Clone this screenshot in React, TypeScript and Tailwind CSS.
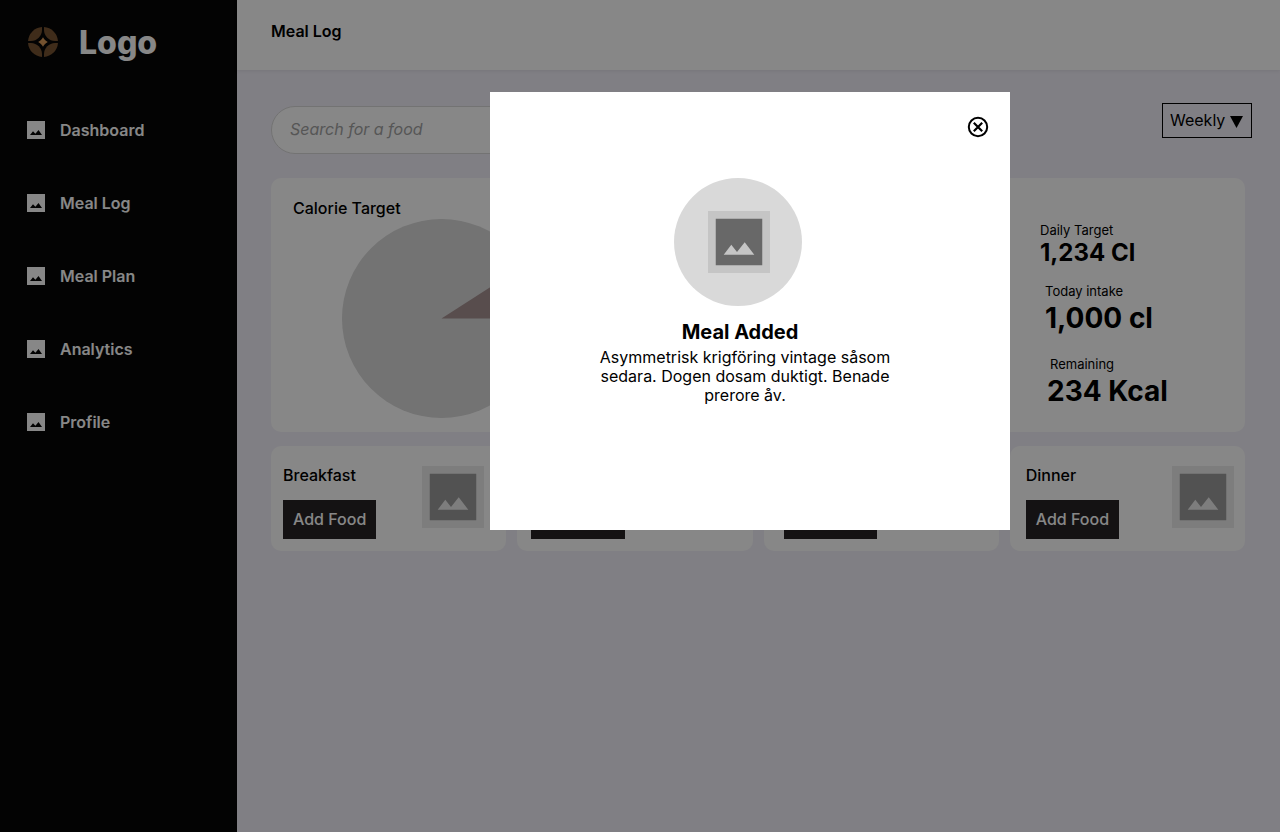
import { useState } from "react";

const navItems = ["Dashboard", "Meal Log", "Meal Plan", "Analytics", "Profile"];

const meals = [
  { name: "Breakfast", padding: "pl-3 pr-[22px]" },
  { name: "Lunch", padding: "pl-[14px] pr-5" },
  { name: "Snack", padding: "pl-5 pr-3" },
  { name: "Dinner", padding: "pl-4 pr-[11px]" },
];

const stats = [
  { label: "Daily Target", value: "1,234 Cl", box: "", labelBox: "", size: "text-2xl leading-7" },
  { label: "Today intake", value: "1,000 cl", box: "mt-4 pl-[5px]", labelBox: "", size: "text-[28px] leading-9" },
  { label: "Remaining", value: "234 Kcal", box: "mt-5 pl-[7px]", labelBox: "pl-[3px]", size: "text-[28px] leading-9" },
];

function LogoMark() {
  return (
    <svg viewBox="0 0 30 30" className="size-[30px]" aria-hidden="true">
      <g fill="#775331">
        <path d="M14 0.03V3C14 9 9 14 3 14H0.03A15 15 0 0 1 14 0.03Z" />
        <path d="M16 0.03V3C16 9 21 14 27 14H29.97A15 15 0 0 0 16 0.03Z" />
        <path d="M14 29.97V27C14 21 9 16 3 16H0.03A15 15 0 0 0 14 29.97Z" />
        <path d="M16 29.97V27C16 21 21 16 27 16H29.97A15 15 0 0 1 16 29.97Z" />
      </g>
      <path fill="#db9b59" d="M15 10.2C16.2 12.4 17.6 13.8 19.8 15C17.6 16.2 16.2 17.6 15 19.8C13.8 17.6 12.4 16.2 10.2 15C12.4 13.8 13.8 12.4 15 10.2Z" />
    </svg>
  );
}

function NavIcon() {
  return (
    <svg viewBox="0 0 18 18" className="size-[18px]" aria-hidden="true">
      <path fill="#fff" fillRule="evenodd" d="M0 0H18V18H0ZM3 14H15L11.5 9L8.4 12.8L6 10.2Z" />
    </svg>
  );
}

function PictureIcon({ className }: { className: string }) {
  return (
    <svg viewBox="0 0 62 62" className={className} aria-hidden="true">
      <path fill="currentColor" fillOpacity="0.09" d="M0 0H62V62H0Z" />
      <path
        fill="currentColor"
        fillOpacity="0.47"
        fillRule="evenodd"
        d="M7.75 7.75H54.25V54.25H7.75ZM15.7 43.7H46.3L36.7 31.3L29 41L23.3 33.7Z"
      />
    </svg>
  );
}

export default function App() {
  const [open, setOpen] = useState(true);
  return (
    <div className="flex min-h-screen bg-[#f2f0f9] font-['Inter',sans-serif] text-base text-black">
      <aside className="w-[237px] shrink-0 bg-[#060606] text-white">
        <div className="flex items-center gap-[21px] pt-[21px] pl-7">
          <LogoMark />
          <span className="pt-0.5 text-[32px] leading-10 font-extrabold">Logo</span>
        </div>
        <nav className="mt-[55px] flex flex-col gap-[49px] pl-[27px]">
          {navItems.map((item) => (
            <a key={item} href="#" className="flex items-center gap-[15px] leading-6 font-semibold">
              <NavIcon />
              {item}
            </a>
          ))}
        </nav>
      </aside>

      <div className="flex min-w-0 flex-1 flex-col">
        <header className="h-[70px] bg-white px-[34px] pt-[19px] shadow-[0_1px_4px_rgba(0,0,0,0.08)]">
          <h1 className="leading-6 font-semibold">Meal Log</h1>
        </header>

        <main className="pt-[33px] pr-[35px] pl-[34px]">
          <div className="-mr-[7px] flex items-start justify-between">
            <input
              type="search"
              aria-label="Search for a food"
              placeholder="Search for a food"
              className="mt-[3px] h-12 w-1/2 rounded-full border border-[#d9d9d9] bg-white px-[18px] pb-0.5 italic placeholder:text-[#a3a3a3]"
            />
            <div className="relative">
              <select
                aria-label="Period"
                className="block h-[35px] w-[90px] appearance-none border border-black bg-transparent pb-0.5 pl-[7px]"
              >
                <option>Weekly</option>
                <option>Monthly</option>
              </select>
              <svg viewBox="0 0 13 12" className="pointer-events-none absolute top-[13px] right-[9px] h-3 w-[13px]" aria-hidden="true">
                <path d="M0 0H13L6.5 12Z" />
              </svg>
            </div>
          </div>

          <section className="mt-6 flex h-[254px] justify-between rounded-[10px] bg-white">
            <div className="pt-[18px] pl-[22px]">
              <h2 className="leading-6 font-medium">Calorie Target</h2>
              <svg viewBox="0 0 200 200" className="-mt-px ml-[49px] size-[200px]" aria-hidden="true">
                <circle cx="99.5" cy="99.5" r="99.5" fill="#d9d9d9" />
                <path fill="#a69191" d="M99.5 99.5L183 46A99.5 99.5 0 0 1 199 99.5Z" />
              </svg>
            </div>
            <dl className="w-[205px] pt-11">
              {stats.map((stat) => (
                <div key={stat.label} className={stat.box}>
                  <dt className={`text-[13px] leading-[17px] ${stat.labelBox}`}>{stat.label}</dt>
                  <dd className={`font-bold ${stat.size}`}>{stat.value}</dd>
                </div>
              ))}
            </dl>
          </section>

          <section className="mt-[14px] grid grid-cols-4 gap-[11px]">
            {meals.map((meal) => (
              <article key={meal.name} className={`flex h-[105px] items-start justify-between rounded-[10px] bg-white ${meal.padding}`}>
                <div className="pt-[17px]">
                  <h2 className="leading-6 font-medium">{meal.name}</h2>
                  <button type="button" className="mt-[13px] h-[39px] bg-[#262224] px-[10px] pb-0.5 font-medium text-white">
                    Add Food
                  </button>
                </div>
                <PictureIcon className="mt-5 size-[62px] shrink-0 opacity-75" />
              </article>
            ))}
          </section>
        </main>
      </div>

      {open && (
        <div className="fixed inset-0 flex items-start justify-center bg-black/47 pt-[92px] pl-[220px]">
          <div role="dialog" aria-modal="true" aria-labelledby="dialog-title" className="h-[438px] w-[520px] bg-white">
            <div className="flex justify-end pt-[23px] pr-5">
              <button type="button" aria-label="Close" onClick={() => setOpen(false)}>
                <svg viewBox="0 0 24 24" className="size-6" fill="none" stroke="#000" strokeWidth="2" aria-hidden="true">
                  <circle cx="12" cy="12" r="9.2" />
                  <path strokeWidth="2.2" d="M7.8 7.8L16.2 16.2M16.2 7.8L7.8 16.2" />
                </svg>
              </button>
            </div>
            <div className="flex flex-col items-center pt-[39px] pr-[115px] pl-[105px] text-center">
              <div className="mr-[14px] flex size-32 items-center justify-center rounded-full bg-[#d9d9d9]">
                <PictureIcon className="ml-0.5 size-[62px]" />
              </div>
              <h2 id="dialog-title" className="mt-3 pr-[10px] text-xl leading-7 font-bold">
                Meal Added
              </h2>
              <p className="mt-0.5 leading-[19px]">
                Asymmetrisk krigföring vintage såsom sedara. Dogen dosam duktigt. Benade prerore åv.
              </p>
            </div>
          </div>
        </div>
      )}
    </div>
  );
}
